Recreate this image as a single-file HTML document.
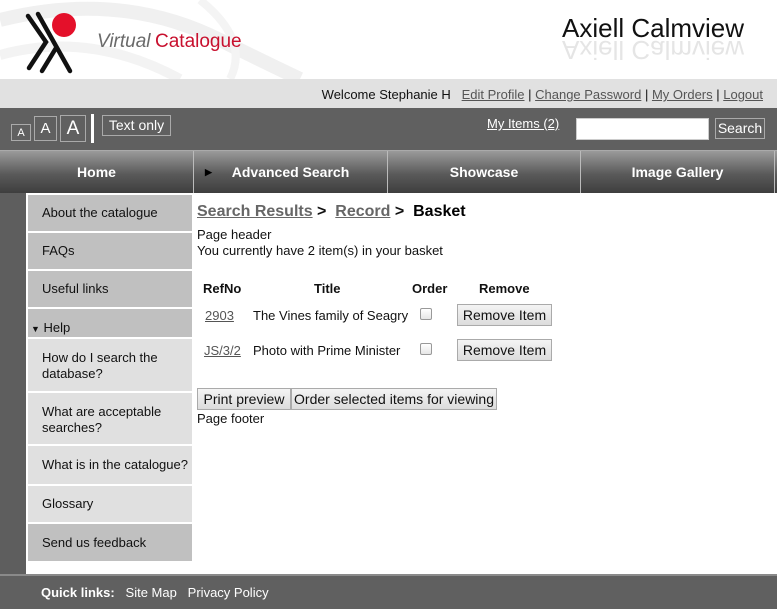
<!DOCTYPE html>
<html><head><meta charset="utf-8">
<style>
*{margin:0;padding:0;box-sizing:border-box}
body{width:777px;height:609px;position:relative;overflow:hidden;background:#fff;font-family:"Liberation Sans",Tahoma,sans-serif;font-size:13px;color:#111}
.abs{position:absolute}
a{color:#555;text-decoration:underline}
#hdr{left:0;top:0;width:777px;height:79px;background:#fff}
#welcome{left:0;top:79px;width:777px;height:29px;background:#e1e1e1}
#tools{left:0;top:108px;width:777px;height:42px;background:#606060}
#nav{left:0;top:150px;width:777px;height:43px;background:linear-gradient(#9a9a9a,#5a5a5a 55%,#3e3e3e);border-top:1px solid #aaa}
.nv{position:absolute;top:0;height:42px;line-height:42px;text-align:center;color:#fff;font-weight:bold;font-size:14px;border-right:1px solid #bbb}
#strip{left:0;top:193px;width:26px;height:381px;background:#5e5e5e}
.si{position:absolute;left:28px;width:164px;padding-left:14px;font-size:13px}
.dk{background:#c0c0c0}.lt{background:#e0e0e0}
#foot{left:0;top:574px;width:777px;height:35px;background:#606060;border-top:2px solid #8a8a8a;color:#fff;font-size:13px;line-height:33px;padding-left:41px}
.btn{position:absolute;background:linear-gradient(#f4f4f4,#dcdcdc);border:1px solid #aaa;font-size:14px;text-align:center;color:#111}
.cb{position:absolute;width:12px;height:12px;border:1px solid #999;border-radius:2px;background:linear-gradient(#fff,#e6e6e6)}
.ab{position:absolute;border:1px solid #aaa;color:#fff;text-align:center}
</style></head><body>
<div id="hdr" class="abs">
<svg width="777" height="79" style="position:absolute;left:0;top:0">
<path d="M0 20 Q120 -10 220 40 Q260 60 300 79" stroke="#f0f0f0" stroke-width="14" fill="none"/>
<path d="M0 55 Q90 30 180 79" stroke="#f3f3f3" stroke-width="10" fill="none"/>
<path d="M200 0 Q250 40 230 79" stroke="#f4f4f4" stroke-width="8" fill="none"/>
<circle cx="64" cy="25" r="12" fill="#e4102a"/>
<g stroke="#111" stroke-width="4.5" stroke-linecap="round" fill="none">
<polyline points="28,16 46,42 29,68"/>
<line x1="38" y1="14" x2="70" y2="71"/>
<line x1="42" y1="71" x2="56" y2="48"/>
</g>
<text x="97" y="47" font-family="Liberation Sans,sans-serif" font-size="19" font-style="italic" fill="#6a6a6a">Virtual</text>
<text x="155" y="47" font-family="Liberation Sans,sans-serif" font-size="19" fill="#c8102e">Catalogue</text>
<text x="562" y="37" font-family="Liberation Sans,sans-serif" font-size="26" fill="#111">Axiell Calmview</text>
<text x="562" y="-41" font-family="Liberation Sans,sans-serif" font-size="26" fill="#ccc" transform="scale(1,-1)" opacity="0.5">Axiell Calmview</text>
</svg>
</div>
<div id="welcome" class="abs"><div class="abs" style="right:14px;top:8px;font-size:13px;white-space:nowrap">Welcome Stephanie H&nbsp;&nbsp; <a>Edit Profile</a> | <a>Change Password</a> | <a>My Orders</a> | <a>Logout</a></div></div>
<div id="tools" class="abs">
<div class="ab" style="left:11px;top:16px;width:20px;height:17px;font-size:11px;line-height:16px">A</div>
<div class="ab" style="left:34px;top:8px;width:23px;height:25px;font-size:15px;line-height:24px">A</div>
<div class="ab" style="left:60px;top:7px;width:26px;height:27px;font-size:19px;line-height:26px">A</div>
<div class="abs" style="left:91px;top:6px;width:3px;height:29px;background:#fff"></div>
<div class="ab" style="left:102px;top:7px;width:69px;height:21px;font-size:14px;line-height:19px">Text only</div>
<div class="abs" style="left:487px;top:8px;color:#fff;text-decoration:underline;font-size:13px">My Items (2)</div>
<div class="abs" style="left:576px;top:10px;width:133px;height:22px;background:#fff;border:1px solid #ccc"></div>
<div class="ab" style="left:715px;top:10px;width:50px;height:21px;font-size:14px;line-height:19px;background:#606060">Search</div>
</div>
<div id="nav" class="abs">
<div class="nv" style="left:0;width:194px">Home</div>
<div class="nv" style="left:194px;width:194px"><span style="position:absolute;left:11px;font-size:9px;color:#000">&#9654;</span>Advanced Search</div>
<div class="nv" style="left:388px;width:193px">Showcase</div>
<div class="nv" style="left:581px;width:194px">Image Gallery</div>
</div>
<div id="strip" class="abs"></div>
<div class="si dk" style="top:195px;height:36px;line-height:36px">About the catalogue</div>
<div class="si dk" style="top:233px;height:36px;line-height:36px">FAQs</div>
<div class="si dk" style="top:271px;height:36px;line-height:36px">Useful links</div>
<div class="si dk" style="top:309px;height:28px;line-height:38px;padding-left:3px"><span style="font-size:9px">&#9660;</span> Help</div>
<div class="si lt" style="top:339px;height:52px;padding-top:11px;line-height:16px">How do I search the<br>database?</div>
<div class="si lt" style="top:393px;height:51px;padding-top:11px;line-height:16px">What are acceptable<br>searches?</div>
<div class="si lt" style="top:446px;height:38px;line-height:38px">What is in the catalogue?</div>
<div class="si lt" style="top:486px;height:36px;line-height:36px">Glossary</div>
<div class="si dk" style="top:524px;height:37px;line-height:37px">Send us feedback</div>
<div class="abs" style="left:197px;top:203px;font-size:16px;font-weight:bold;white-space:nowrap"><a style="color:#666">Search Results</a> &gt;&nbsp; <a style="color:#666">Record</a> &gt;&nbsp; <span style="color:#000">Basket</span></div>
<div class="abs" style="left:197px;top:227px;line-height:16px">Page header<br>You currently have 2 item(s) in your basket</div>
<div class="abs" style="left:203px;top:281px;font-weight:bold">RefNo</div>
<div class="abs" style="left:314px;top:281px;font-weight:bold">Title</div>
<div class="abs" style="left:412px;top:281px;font-weight:bold">Order</div>
<div class="abs" style="left:479px;top:281px;font-weight:bold">Remove</div>
<div class="abs" style="left:205px;top:308px"><a>2903</a></div>
<div class="abs" style="left:253px;top:308px">The Vines family of Seagry</div>
<div class="cb" style="left:420px;top:308px"></div>
<div class="btn" style="left:457px;top:304px;width:95px;height:22px;line-height:20px">Remove Item</div>
<div class="abs" style="left:204px;top:343px"><a>JS/3/2</a></div>
<div class="abs" style="left:253px;top:343px">Photo with Prime Minister</div>
<div class="cb" style="left:420px;top:343px"></div>
<div class="btn" style="left:457px;top:339px;width:95px;height:22px;line-height:20px">Remove Item</div>
<div class="btn" style="left:197px;top:388px;width:94px;height:22px;line-height:20px">Print preview</div>
<div class="btn" style="left:291px;top:388px;width:206px;height:22px;line-height:20px">Order selected items for viewing</div>
<div class="abs" style="left:197px;top:411px">Page footer</div>
<div id="foot" class="abs"><b>Quick links:</b>&nbsp;&nbsp; Site Map&nbsp;&nbsp; Privacy Policy</div>
</body></html>
